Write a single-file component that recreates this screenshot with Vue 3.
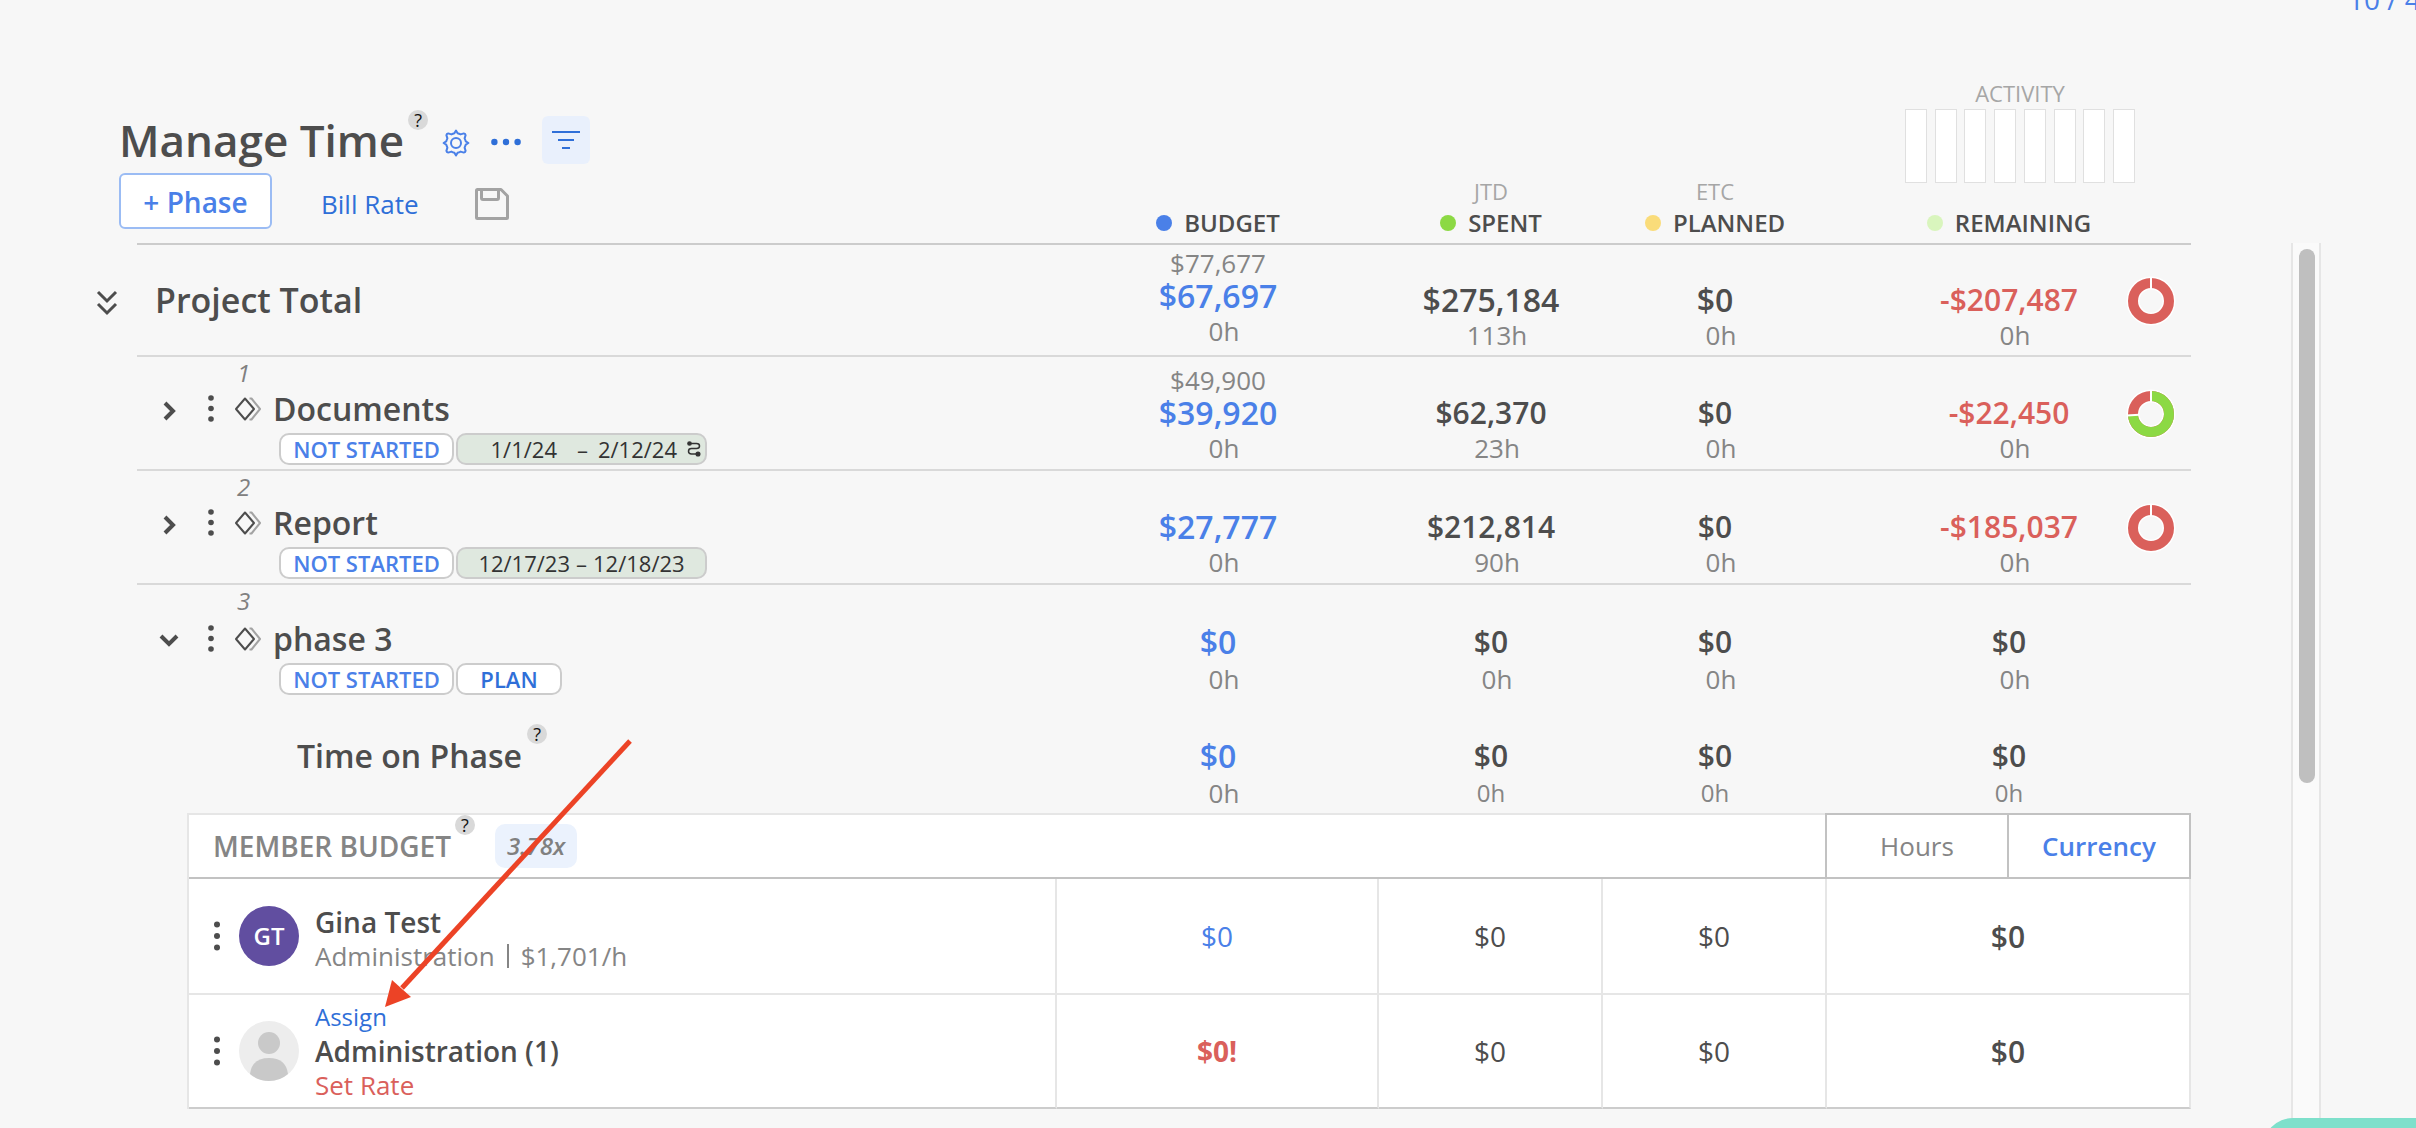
<script setup>
import { ref } from 'vue'

const unit = ref('Currency')

const total = {
  was: '$77,677', budget: '$67,697', budgetHours: '0h',
  spent: '$275,184', spentHours: '113h',
  remaining: '-$207,487', ring: 0,
}

const phases = [
  {
    no: 1, name: 'Documents', open: false, start: '1/1/24', end: '2/12/24', linked: true,
    was: '$49,900', budget: '$39,920', spent: '$62,370', spentHours: '23h',
    remaining: '-$22,450', ring: 74,
  },
  {
    no: 2, name: 'Report', open: false, start: '12/17/23', end: '12/18/23', linked: false,
    was: '', budget: '$27,777', spent: '$212,814', spentHours: '90h',
    remaining: '-$185,037', ring: 0,
  },
  {
    no: 3, name: 'phase 3', open: true, start: '', end: '', linked: false,
    was: '', budget: '$0', spent: '$0', spentHours: '0h',
    remaining: '$0', ring: null,
  },
]

const members = [
  { name: 'Gina Test', initials: 'GT', role: 'Administration', rate: '$1,701/h', budget: '$0' },
  { name: 'Administration (1)', initials: '', role: '', rate: '', budget: '$0!' },
]

const CIRC = 2 * Math.PI * 18
</script>

<template>
  <div class="page">
    <a class="pager" href="#">10 / 4</a>

    <main class="main">
      <table class="summary">
        <colgroup>
          <col class="c-gutter" /><col /><col class="c-budget" /><col class="c-mid" /><col class="c-mid" /><col class="c-rem" />
        </colgroup>
        <thead>
          <tr>
            <td colspan="2" class="tools">
              <div class="title-row">
                <h1>Manage Time</h1>
                <button class="help help-title" type="button" aria-label="Help">?</button>
                <button class="icon gear" type="button" aria-label="Settings">
                  <svg width="28" height="28" viewBox="0 0 28 28" fill="none" stroke="#4a80e8" stroke-width="2" stroke-linejoin="round">
                    <path d="M12.4 4.2 L14 1.6 L15.6 4.2 Q17 4.6 18.6 5.4 L21.9 4.4 Q23.4 4.6 23.6 6.1 L22.6 9.4 Q23.4 11 23.8 12.4 L26.4 14 L23.8 15.6 Q23.4 17 22.6 18.6 L23.6 21.9 Q23.4 23.4 21.9 23.6 L18.6 22.6 Q17 23.4 15.6 23.8 L14 26.4 L12.4 23.8 Q11 23.4 9.4 22.6 L6.1 23.6 Q4.6 23.4 4.4 21.9 L5.4 18.6 Q4.6 17 4.2 15.6 L1.6 14 L4.2 12.4 Q4.6 11 5.4 9.4 L4.4 6.1 Q4.6 4.6 6.1 4.4 L9.4 5.4 Q11 4.6 12.4 4.2 Z" />
                    <circle cx="14" cy="14" r="5" />
                  </svg>
                </button>
                <button class="icon more" type="button" aria-label="More">
                  <svg width="30" height="8" viewBox="0 0 30 8" fill="#2f6fd8"><circle cx="3.4" cy="4" r="3.2" /><circle cx="15" cy="4" r="3.2" /><circle cx="26.6" cy="4" r="3.2" /></svg>
                </button>
                <button class="icon filter" type="button" aria-label="Filter">
                  <svg width="28" height="20" viewBox="0 0 28 20" fill="#2f6fd8"><path d="M0 1h28v2H0zM6 9h16v2H6zM10 17h8v2h-8z" /></svg>
                </button>
              </div>
              <div class="action-row">
                <button class="add" type="button">+ Phase</button>
                <a class="bill" href="#">Bill Rate</a>
                <button class="icon save" type="button" aria-label="Save">
                  <svg width="34" height="32" viewBox="0 0 34 32" fill="none" stroke="#a3a3a3" stroke-width="3" stroke-linejoin="round">
                    <path d="M2.5 1.5h23.5l6.500 6.500v21.500q0 1-1 1h-29q-1 0-1-1v-27q0-1 1-1z" />
                    <path d="M6.500 2v8q0 1.500 1.500 1.500h14q1.500 0 1.500-1.500v-8" />
                  </svg>
                </button>
              </div>
            </td>
            <th scope="col"><div class="head"><i class="dot blue"></i>BUDGET</div></th>
            <th scope="col"><div class="over">JTD</div><div class="head"><i class="dot green"></i>SPENT</div></th>
            <th scope="col"><div class="over">ETC</div><div class="head"><i class="dot yellow"></i>PLANNED</div></th>
            <th scope="col">
              <div class="activity">
                <div class="over">ACTIVITY</div>
                <div class="bars"><i v-for="n in 8" :key="n"></i></div>
              </div>
              <div class="head"><i class="dot pale"></i>REMAINING</div>
            </th>
          </tr>
        </thead>

        <tbody>
          <tr class="total">
            <td class="gutter">
              <button class="icon" type="button" aria-label="Expand all">
                <svg width="22" height="26" viewBox="0 0 22 26" fill="none" stroke="#4d4d4d" stroke-width="3"><path d="M2 2l9 9 9-9M2 14l9 9 9-9" /></svg>
              </button>
            </td>
            <td class="name-cell total-name">Project Total</td>
            <td>
              <div class="was">{{ total.was }}</div>
              <div class="amount budget">{{ total.budget }}</div>
              <div class="hours">{{ total.budgetHours }}</div>
            </td>
            <td class="low"><div class="was"></div><div class="amount large">{{ total.spent }}</div><div class="hours">{{ total.spentHours }}</div></td>
            <td class="low"><div class="was"></div><div class="amount large">$0</div><div class="hours">0h</div></td>
            <td class="low">
              <div class="rem">
                <div class="rem-text"><div class="was"></div><div class="amount neg">{{ total.remaining }}</div><div class="hours">0h</div></div>
                <svg class="ring" width="50" height="50" viewBox="0 0 50 50" fill="none">
                  <circle cx="25" cy="25" r="18" stroke="#fff" stroke-width="13" />
                  <circle cx="25" cy="25" r="18" stroke="#da605b" stroke-width="10" />
                  <path d="M25 1v12" stroke="#fff" stroke-width="2" />
                </svg>
              </div>
            </td>
          </tr>

          <tr v-for="p in phases" :key="p.no" class="phase" :class="{ open: p.open }">
            <td class="gutter"></td>
            <td class="name-cell">
              <div class="no">{{ p.no }}</div>
              <div class="name-row">
                <button class="icon chev" type="button" :aria-label="p.open ? 'Collapse' : 'Expand'">
                  <svg v-if="p.open" width="20" height="20" viewBox="0 0 20 20" fill="none" stroke="#4d4d4d" stroke-width="4"><path d="M2 5l8 8 8-8" /></svg>
                  <svg v-else width="20" height="20" viewBox="0 0 20 20" fill="none" stroke="#4d4d4d" stroke-width="4"><path d="M6 2l8 8-8 8" /></svg>
                </button>
                <button class="icon dots" type="button" aria-label="Phase menu">
                  <svg width="6" height="28" viewBox="0 0 6 28" fill="#4d4d4d"><circle cx="3" cy="3" r="2.800" /><circle cx="3" cy="13.500" r="2.800" /><circle cx="3" cy="24" r="2.800" /></svg>
                </button>
                <svg class="gem" width="28" height="24" viewBox="0 0 28 24" fill="none" stroke-width="2" stroke-linejoin="round">
                  <path d="M15.500 1.500h2L26 12l-8.500 10.500h-2" stroke="#a3a3a3" />
                  <path d="M11 1.500L20 12l-9 10.500L2 12z" stroke="#4d4d4d" fill="#f7f7f7" />
                </svg>
                <span class="name">{{ p.name }}</span>
              </div>
              <div class="tags">
                <button class="tag status" type="button">NOT STARTED</button>
                <button v-if="p.start" class="tag dates" :class="{ linked: p.linked }" type="button">
                  <span>{{ p.start }}</span><span>–</span><span>{{ p.end }}</span>
                  <svg v-if="p.linked" width="14" height="16" viewBox="0 0 14 16" fill="none" stroke="#333" stroke-width="1.500">
                    <path d="M3 2.500h6.500q3 0 3 2.500t-3 2.500H4.500q-3 0-3 2.700t3 2.800h6" />
                    <circle cx="2.500" cy="2.500" r="1.600" fill="#333" /><circle cx="11" cy="13" r="1.800" fill="#333" />
                  </svg>
                </button>
                <button v-else class="tag plan" type="button">PLAN</button>
              </div>
            </td>
            <td>
              <div class="was">{{ p.was }}</div>
              <div class="amount budget">{{ p.budget }}</div>
              <div class="hours">0h</div>
            </td>
            <td><div class="was"></div><div class="amount">{{ p.spent }}</div><div class="hours">{{ p.spentHours }}</div></td>
            <td><div class="was"></div><div class="amount">$0</div><div class="hours">0h</div></td>
            <td>
              <div class="rem">
                <div class="rem-text">
                  <div class="was"></div>
                  <div class="amount" :class="{ neg: p.ring !== null }">{{ p.remaining }}</div>
                  <div class="hours">0h</div>
                </div>
                <svg v-if="p.ring !== null" class="ring" width="50" height="50" viewBox="0 0 50 50" fill="none">
                  <circle cx="25" cy="25" r="18" stroke="#fff" stroke-width="13" />
                  <circle cx="25" cy="25" r="18" stroke="#da605b" stroke-width="10" />
                  <circle v-if="p.ring" cx="25" cy="25" r="18" stroke="#8cd944" stroke-width="10"
                    :stroke-dasharray="(CIRC * p.ring) / 100 + ' ' + CIRC" transform="rotate(-90 25 25)" />
                  <path v-if="p.ring" d="M1 26.500l12-.7" stroke="#fff" stroke-width="2" />
                  <path d="M25 1v12" stroke="#fff" stroke-width="2" />
                </svg>
              </div>
            </td>
          </tr>

          <tr class="own">
            <td class="gutter"></td>
            <td class="name-cell own-name">
              <div class="own-row"><span>Time on Phase</span><button class="help help-own" type="button" aria-label="Help">?</button></div>
            </td>
            <td><div class="amount budget">$0</div><div class="hours">0h</div></td>
            <td><div class="amount">$0</div><div class="hours small">0h</div></td>
            <td><div class="amount">$0</div><div class="hours small">0h</div></td>
            <td><div class="amount">$0</div><div class="hours small">0h</div></td>
          </tr>
        </tbody>
      </table>

      <section class="members">
        <header class="members-head">
          <h2>MEMBER BUDGET</h2>
          <button class="help help-member" type="button" aria-label="Help">?</button>
          <span class="factor">3.78x</span>
          <div class="toggle">
            <button v-for="u in ['Hours', 'Currency']" :key="u" type="button" :class="{ on: unit === u }" @click="unit = u">{{ u }}</button>
          </div>
        </header>
        <table class="member-table">
          <colgroup><col /><col class="c-budget" /><col class="c-mid" /><col class="c-mid" /><col class="c-rem" /></colgroup>
          <tbody>
            <tr v-for="m in members" :key="m.name">
              <td>
                <div class="member">
                  <button class="icon" type="button" aria-label="Member menu">
                    <svg width="8" height="32" viewBox="0 0 8 32" fill="#4d4d4d"><circle cx="4" cy="4.500" r="3" /><circle cx="4" cy="16" r="3" /><circle cx="4" cy="27.500" r="3" /></svg>
                  </button>
                  <span v-if="m.initials" class="avatar">{{ m.initials }}</span>
                  <svg v-else class="avatar-blank" width="60" height="60" viewBox="0 0 60 60">
                    <circle cx="30" cy="30" r="30" fill="#ededed" />
                    <circle cx="30" cy="22" r="11" fill="#c9c9c9" />
                    <path d="M11 53Q13 37 30 37T49 53Q41 60 30 60T11 53z" fill="#c9c9c9" />
                  </svg>
                  <div class="who" :class="{ pair: m.role }">
                    <a v-if="!m.initials" class="assign" href="#">Assign</a>
                    <strong>{{ m.name }}</strong>
                    <div v-if="m.role" class="role"><span>{{ m.role }}</span><i></i><span>{{ m.rate }}</span></div>
                    <a v-else class="set-rate" href="#">Set Rate</a>
                  </div>
                </div>
              </td>
              <td :class="m.initials ? 'm-budget' : 'm-warn'">{{ m.budget }}</td>
              <td>$0</td>
              <td>$0</td>
              <td class="m-rem">$0</td>
            </tr>
          </tbody>
        </table>
      </section>
    </main>

    <div class="track"><div class="thumb"></div></div>

    <svg class="arrow" width="260" height="280" viewBox="0 0 260 280">
      <path d="M250 6L22 253" stroke="#ec4326" stroke-width="5" />
      <path d="M5 272L12 245L31 262z" fill="#ec4326" />
    </svg>
    <div class="chat"></div>
  </div>
</template>

<style>
body {
  background: #f7f7f7;
  overflow: hidden;
}
</style>

<style scoped>
.page {
  position: relative;
  display: flex;
  min-height: 100vh;
  padding: 0 95px 0 96px;
  box-sizing: border-box;
  overflow: hidden;
  background: #f7f7f7;
  color: #4d4d4d;
  font-family: "Open Sans", "Noto Sans", sans-serif;
  font-size: 26px;
}
.page *,
.page *::before {
  box-sizing: border-box;
}
button {
  font-family: inherit;
  color: inherit;
  background: none;
  border: 0;
  padding: 0;
  margin: 0;
  cursor: pointer;
}
a {
  color: #2f6fd8;
  text-decoration: none;
}
.icon {
  display: flex;
}
.pager {
  position: absolute;
  top: -26px;
  left: calc(100% - 68px);
  font-size: 28px;
  line-height: 50px;
  color: #4a80e8;
  white-space: nowrap;
}
.main {
  flex: 1;
  min-width: 0;
}
table {
  width: 100%;
  table-layout: fixed;
  border-collapse: separate;
  border-spacing: 0;
}
td,
th {
  padding: 0;
  vertical-align: top;
  text-align: center;
  font-weight: 400;
}
.c-gutter { width: 41px; }
.c-budget { width: 322px; }
.c-mid { width: 224px; }
.c-rem { width: 364px; }

/* header */
thead td,
thead th {
  height: 245px;
  vertical-align: bottom;
  border-bottom: 2px solid #ccc;
}
thead th {
  padding-bottom: 4px;
}
thead .tools {
  border: 0;
  padding: 0 0 16px 23px;
  background: linear-gradient(#ccc, #ccc) no-repeat 41px 100% / 100% 2px;
}
.title-row {
  display: flex;
  align-items: center;
  height: 60px;
  margin-bottom: 3px;
}
h1 {
  margin: 0;
  font-size: 44px;
  line-height: 60px;
  font-weight: 600;
}
.help {
  width: 20px;
  height: 20px;
  border-radius: 50%;
  background: #d9d9d9;
  color: #111;
  font-size: 18px;
  line-height: 20px;
  text-align: center;
  align-self: flex-start;
}
.help-title { margin-left: 4px; }
.gear { margin: 5px 0 0 14px; }
.more { margin: 4px 0 0 21px; }
.filter {
  width: 48px;
  height: 48px;
  margin-left: 21px;
  border-radius: 6px;
  background: #e9f0fc;
  align-items: center;
  justify-content: center;
}
.action-row {
  display: flex;
  align-items: center;
  height: 56px;
}
.add {
  width: 153px;
  height: 56px;
  padding-top: 2px;
  border: 2px solid #9bbcf4;
  border-radius: 6px;
  background: #fff;
  color: #4a80e8;
  font-size: 28px;
  font-weight: 600;
}
.bill { margin: 6px 56px 0 49px; }
.save { margin-top: 6px; }
.head {
  display: flex;
  align-items: center;
  justify-content: center;
  gap: 12px;
  font-size: 24px;
  line-height: 32px;
  font-weight: 600;
}
.over {
  font-size: 22px;
  line-height: 32px;
  color: #a6a6a6;
}
.dot {
  width: 16px;
  height: 16px;
  border-radius: 50%;
}
.blue { background: #4a80e8; }
.green { background: #8cd944; }
.yellow { background: #fadc7a; }
.pale { background: #d9f5bd; }
.activity {
  width: 230px;
  margin: 0 auto 24px 78px;
}
.bars {
  display: flex;
  justify-content: space-between;
}
.bars i {
  width: 22px;
  height: 74px;
  border: 1px solid #e0e0e0;
  background: #fff;
}

/* summary rows */
.total > td { height: 112px; border-bottom: 2px solid #d9d9d9; padding-top: 2px; }
.total > .low { padding-top: 6px; }
.phase > td { height: 114px; border-bottom: 2px solid #d9d9d9; padding-top: 7px; }
.open > td { border-bottom: 0; padding-top: 8px; }
.own > td { height: 114px; padding-top: 40px; }
tbody > tr > .gutter { border-bottom: 0; }
tbody > tr > .name-cell { text-align: left; padding-top: 0; }
.total .gutter { padding-top: 45px; }
tbody > .total > .total-name {
  padding: 32px 0 0 18px;
  font-size: 34px;
  line-height: 46px;
  font-weight: 600;
}
.was {
  height: 32px;
  line-height: 32px;
  color: #858585;
}
.amount {
  font-size: 30px;
  line-height: 34px;
  font-weight: 600;
}
.large { font-size: 32px; }
.budget { font-size: 32px; color: #4a80e8; }
.neg { color: #da605b; }
.hours {
  padding-left: 12px;
  line-height: 36px;
  color: #858585;
}
.open .hours,
.own .hours { line-height: 40px; }
.own .small { font-size: 24px; padding-left: 0; }
.rem {
  display: grid;
  grid-template-columns: 65px 1fr 65px;
  align-items: center;
}
.rem-text { grid-column: 2; }
.ring { margin-bottom: 2px; }
.no {
  padding-left: 100px;
  font-size: 24px;
  line-height: 32px;
  font-style: italic;
  color: #808080;
}
.name-row {
  display: flex;
  align-items: center;
  height: 40px;
  padding-left: 22px;
}
.open .name-row { margin-top: 2px; }
.chev { margin-top: 4px; }
.dots { margin-left: 29px; }
.gem { margin-left: 20px; }
.name {
  margin-left: 11px;
  font-size: 32px;
  line-height: 40px;
  font-weight: 600;
}
.tags {
  display: flex;
  gap: 2px;
  margin: 4px 0 0 142px;
}
.tag {
  display: flex;
  align-items: center;
  justify-content: center;
  height: 32px;
  border: 2px solid #ccc;
  border-radius: 10px;
  background: #fff;
  font-size: 22px;
  line-height: 28px;
}
.status { width: 175px; color: #4a80e8; font-weight: 600; }
.dates { width: 251px; gap: 6px; background: #dfe8df; color: #333; }
.linked { justify-content: flex-end; padding-right: 4px; gap: 10px; }
.linked span:first-child { margin-right: 10px; }
.plan { width: 106px; color: #2f6fd8; font-weight: 600; }
.own-row {
  display: flex;
  gap: 5px;
  padding: 25px 0 0 160px;
  font-size: 32px;
  line-height: 64px;
  font-weight: 600;
}

/* members */
.members {
  margin-left: 91px;
  border: solid #e6e6e6;
  border-width: 2px 0 0 2px;
  background: #fff;
}
.members-head {
  display: flex;
  align-items: center;
  height: 64px;
  padding-left: 24px;
  border-bottom: 2px solid #c2c2c2;
}
h2 {
  margin: 0;
  font-size: 28px;
  font-weight: 600;
  color: #858585;
}
.help-member { margin-left: 4px; }
.factor {
  margin-left: 20px;
  width: 82px;
  line-height: 44px;
  border-radius: 10px;
  background: #ebf2fd;
  color: #808080;
  font-size: 24px;
  font-style: italic;
  font-weight: 600;
  text-align: center;
}
.toggle {
  display: flex;
  width: 366px;
  height: 66px;
  margin: -2px 0 -2px auto;
  border: 2px solid #c2c2c2;
}
.toggle button {
  flex: 1;
  font-size: 26px;
  color: #858585;
}
.toggle button + button { border-left: 2px solid #c2c2c2; }
.toggle .on { color: #4a80e8; font-weight: 600; }
.member-table td {
  height: 116px;
  vertical-align: middle;
  font-size: 28px;
  border: solid #e6e6e6;
  border-width: 0 2px 2px 0;
}
.member-table tr:last-child td {
  height: 114px;
  border-bottom-color: #ccc;
}
.member-table .m-budget { color: #4a80e8; }
.member-table .m-warn { color: #da605b; font-weight: 700; }
.member-table .m-rem { font-size: 30px; font-weight: 600; }
.member {
  display: flex;
  align-items: center;
  padding-left: 24px;
  text-align: left;
}
.avatar,
.avatar-blank {
  width: 60px;
  height: 60px;
  margin: 0 16px 0 18px;
}
.avatar {
  border-radius: 50%;
  background: #614ea0;
  color: #fff;
  font-size: 24px;
  line-height: 60px;
  font-weight: 600;
  text-align: center;
}
.who {
  display: flex;
  flex-direction: column;
  font-size: 26px;
  line-height: 34px;
}
.pair { padding-top: 6px; }
.who strong { font-size: 28px; font-weight: 600; }
.assign { font-size: 24px; }
.set-rate { color: #da605b; }
.role {
  display: flex;
  align-items: center;
  gap: 12px;
  color: #858585;
}
.role i { width: 2px; height: 24px; background: #858585; }

/* scrollbar, annotation, chat launcher */
.track {
  width: 30px;
  margin: 243px 0 0 100px;
  padding: 6px 4px 0 6px;
  border: solid #e6e6e6;
  border-width: 0 2px;
  background: #fafafa;
}
.thumb {
  height: 534px;
  border-radius: 8px;
  background: #bfbfbf;
}
.arrow {
  position: absolute;
  left: 380px;
  top: 735px;
  pointer-events: none;
}
.chat {
  position: absolute;
  right: -40px;
  bottom: -50px;
  width: 193px;
  height: 60px;
  border-radius: 30px;
  background: #7ee0cb;
}
</style>
